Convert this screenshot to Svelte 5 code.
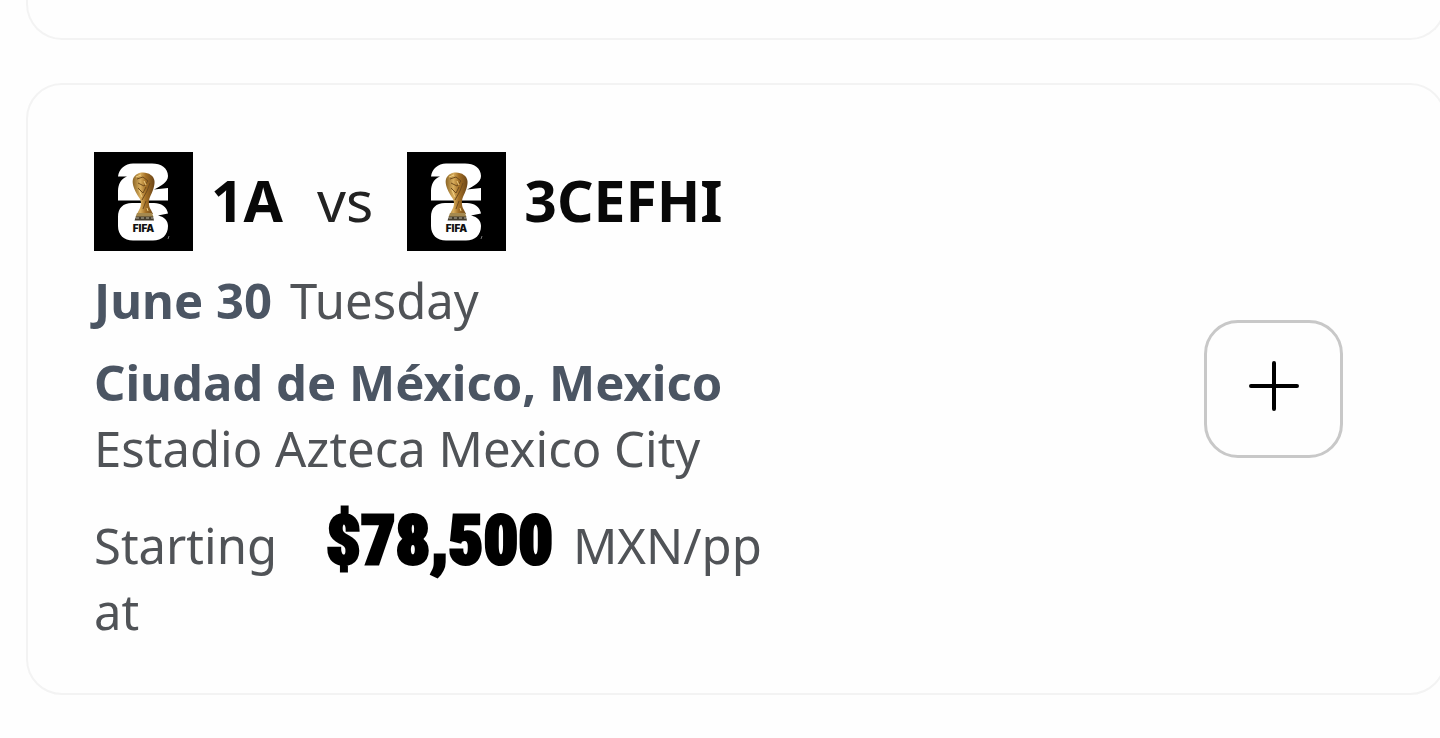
<script lang="ts">
	type Team = { id: string; name: string };

	const teams: Team[] = [
		{ id: 'home', name: '1A' },
		{ id: 'away', name: '3CEFHI' }
	];

	const match = {
		date: 'June 30',
		day: 'Tuesday',
		city: 'Ciudad de México, Mexico',
		stadium: 'Estadio Azteca Mexico City',
		price: '$78,500',
		currency: 'MXN/pp'
	};
</script>

{#snippet emblem(id: string)}
	<svg class="emblem" viewBox="0 0 99 99" role="img" aria-label="FIFA World Cup 26">
		<defs>
			<linearGradient id="gold-{id}" x1="0" x2="1">
				<stop offset="0" stop-color="#8a6426" />
				<stop offset="0.35" stop-color="#d8ad5c" />
				<stop offset="0.6" stop-color="#a36f25" />
				<stop offset="1" stop-color="#6b4518" />
			</linearGradient>
		</defs>
		<rect width="99" height="99" fill="#000" />
		<path
			fill="#fff"
			d="M24 24.500C25 17 31 11.500 39 11.500H58C67 11.500 74 16 74 24C74 30 67 34 60 37.500L74 36V48.500H24V39C24 32 27 27 33 24.500Z"
		/>
		<path
			fill="#fff"
			d="M38 51H60C67 51 73 55 74 61.500L64 63.500C71 65 74 69 74 74C74 83 68 88.500 59 88.500H39C30 88.500 24 83 24 74V65C24 56 29 51 38 51Z"
		/>
		<path
			fill="url(#gold-{id})"
			d="M39 27C41 22 45 20.500 49 20.500C55 20.500 60 24 60.500 29C61 34 58 41 56 45C54 50 55 55 57 58L59 62H43L46 56C48 51 47 48 44 44C41 39 37.500 32 39 27Z"
		/>
		<path
			fill="none"
			stroke="#6f4b1c"
			stroke-width="1"
			d="M43 27L49 25L54 29L50 34L44 31M56 31L53 39L48 48M44 36L49 41L52 35M52 49L49 57"
		/>
		<path fill="none" stroke="#f0cf83" stroke-width="1" d="M42 25L47 23M45 38L48 45M50 29L52 33M53 56L54 59" />
		<path fill="#a5894f" d="M43 61H58L59.500 65H41.500Z" />
		<path fill="#453d2e" d="M42 64.500H59L60 68.500H40.500Z" />
		<path stroke="#b9b39f" stroke-width="1" stroke-dasharray="3 2" d="M42 66H59" />
		<text x="49.500" y="80" text-anchor="middle">FIFA</text>
		<path fill="none" stroke="#777" stroke-width="1" d="M75 84L74 87" />
	</svg>
{/snippet}

<main>
	<article class="card previous" aria-hidden="true"></article>

	<article class="card">
		<div class="details">
			<div class="teams">
				{#each teams as team, i (team.id)}
					{#if i > 0}<span class="versus">vs</span>{/if}
					<div class="team">
						{@render emblem(team.id)}
						<strong>{team.name}</strong>
					</div>
				{/each}
			</div>
			<p class="date"><b>{match.date}</b><span>{match.day}</span></p>
			<p class="venue"><b>{match.city}</b><span>{match.stadium}</span></p>
			<div class="pricing">
				<span class="label">Starting at</span>
				<span class="price">{match.price}</span>
				<span>{match.currency}</span>
			</div>
		</div>
		<button type="button" aria-label="Add match">
			<svg viewBox="0 0 50 50" aria-hidden="true">
				<path d="M25 2V48M2 25H48" />
			</svg>
		</button>
	</article>
</main>

<style>
	:global(body) {
		margin: 0;
		background: #fefefe;
		font-family: 'Noto Sans', sans-serif;
	}

	main {
		display: flex;
		flex-direction: column;
		gap: 43px;
		padding: 0 0 44px 26px;
		overflow: hidden;
	}

	.card {
		display: flex;
		align-items: center;
		justify-content: space-between;
		box-sizing: border-box;
		margin-right: -6px;
		padding: 49px 101px 49px 66px;
		border: 2px solid #f3f3f3;
		border-radius: 36px;
		background: #fefefe;
	}

	.previous {
		height: 40px;
		padding: 0;
		border-top: 0;
		border-radius: 0 0 36px 36px;
	}

	.details {
		font-size: 49px;
		line-height: 66px;
		color: #505357;
	}

	.teams,
	.team {
		display: flex;
		align-items: center;
	}

	.teams {
		gap: 34px;
		margin: 18px 0 16px;
	}

	.team {
		gap: 18px;
		color: #080808;
	}

	.team strong,
	.versus {
		padding-bottom: 4px;
		font-size: 57px;
	}

	.emblem {
		display: block;
		width: 99px;
		height: 99px;
	}

	.emblem text {
		font: 900 10px 'Inter', sans-serif;
		fill: #111;
	}

	.versus {
		color: #222;
	}

	p {
		display: flex;
		margin: 0 0 16px;
	}

	b {
		font-weight: 700;
		color: #4b5563;
	}

	.date {
		gap: 18px;
	}

	.venue {
		flex-direction: column;
		margin-bottom: 30px;
	}

	.pricing {
		display: flex;
		align-items: baseline;
		gap: 20px;
	}

	.label {
		width: 212px;
	}

	.price {
		font-family: 'Roboto Condensed', Roboto, sans-serif;
		font-size: 68px;
		font-weight: 900;
		line-height: 60px;
		color: #000;
		-webkit-text-stroke: 3px #000;
	}

	button {
		display: grid;
		flex: none;
		place-items: center;
		width: 139px;
		height: 138px;
		padding: 0 0 6px;
		border: 3px solid #c8c8c8;
		border-radius: 34px;
		background: #fefefe;
		cursor: pointer;
	}

	button svg {
		width: 50px;
		height: 50px;
		fill: none;
		stroke: #000;
		stroke-width: 4;
		stroke-linecap: round;
	}
</style>
